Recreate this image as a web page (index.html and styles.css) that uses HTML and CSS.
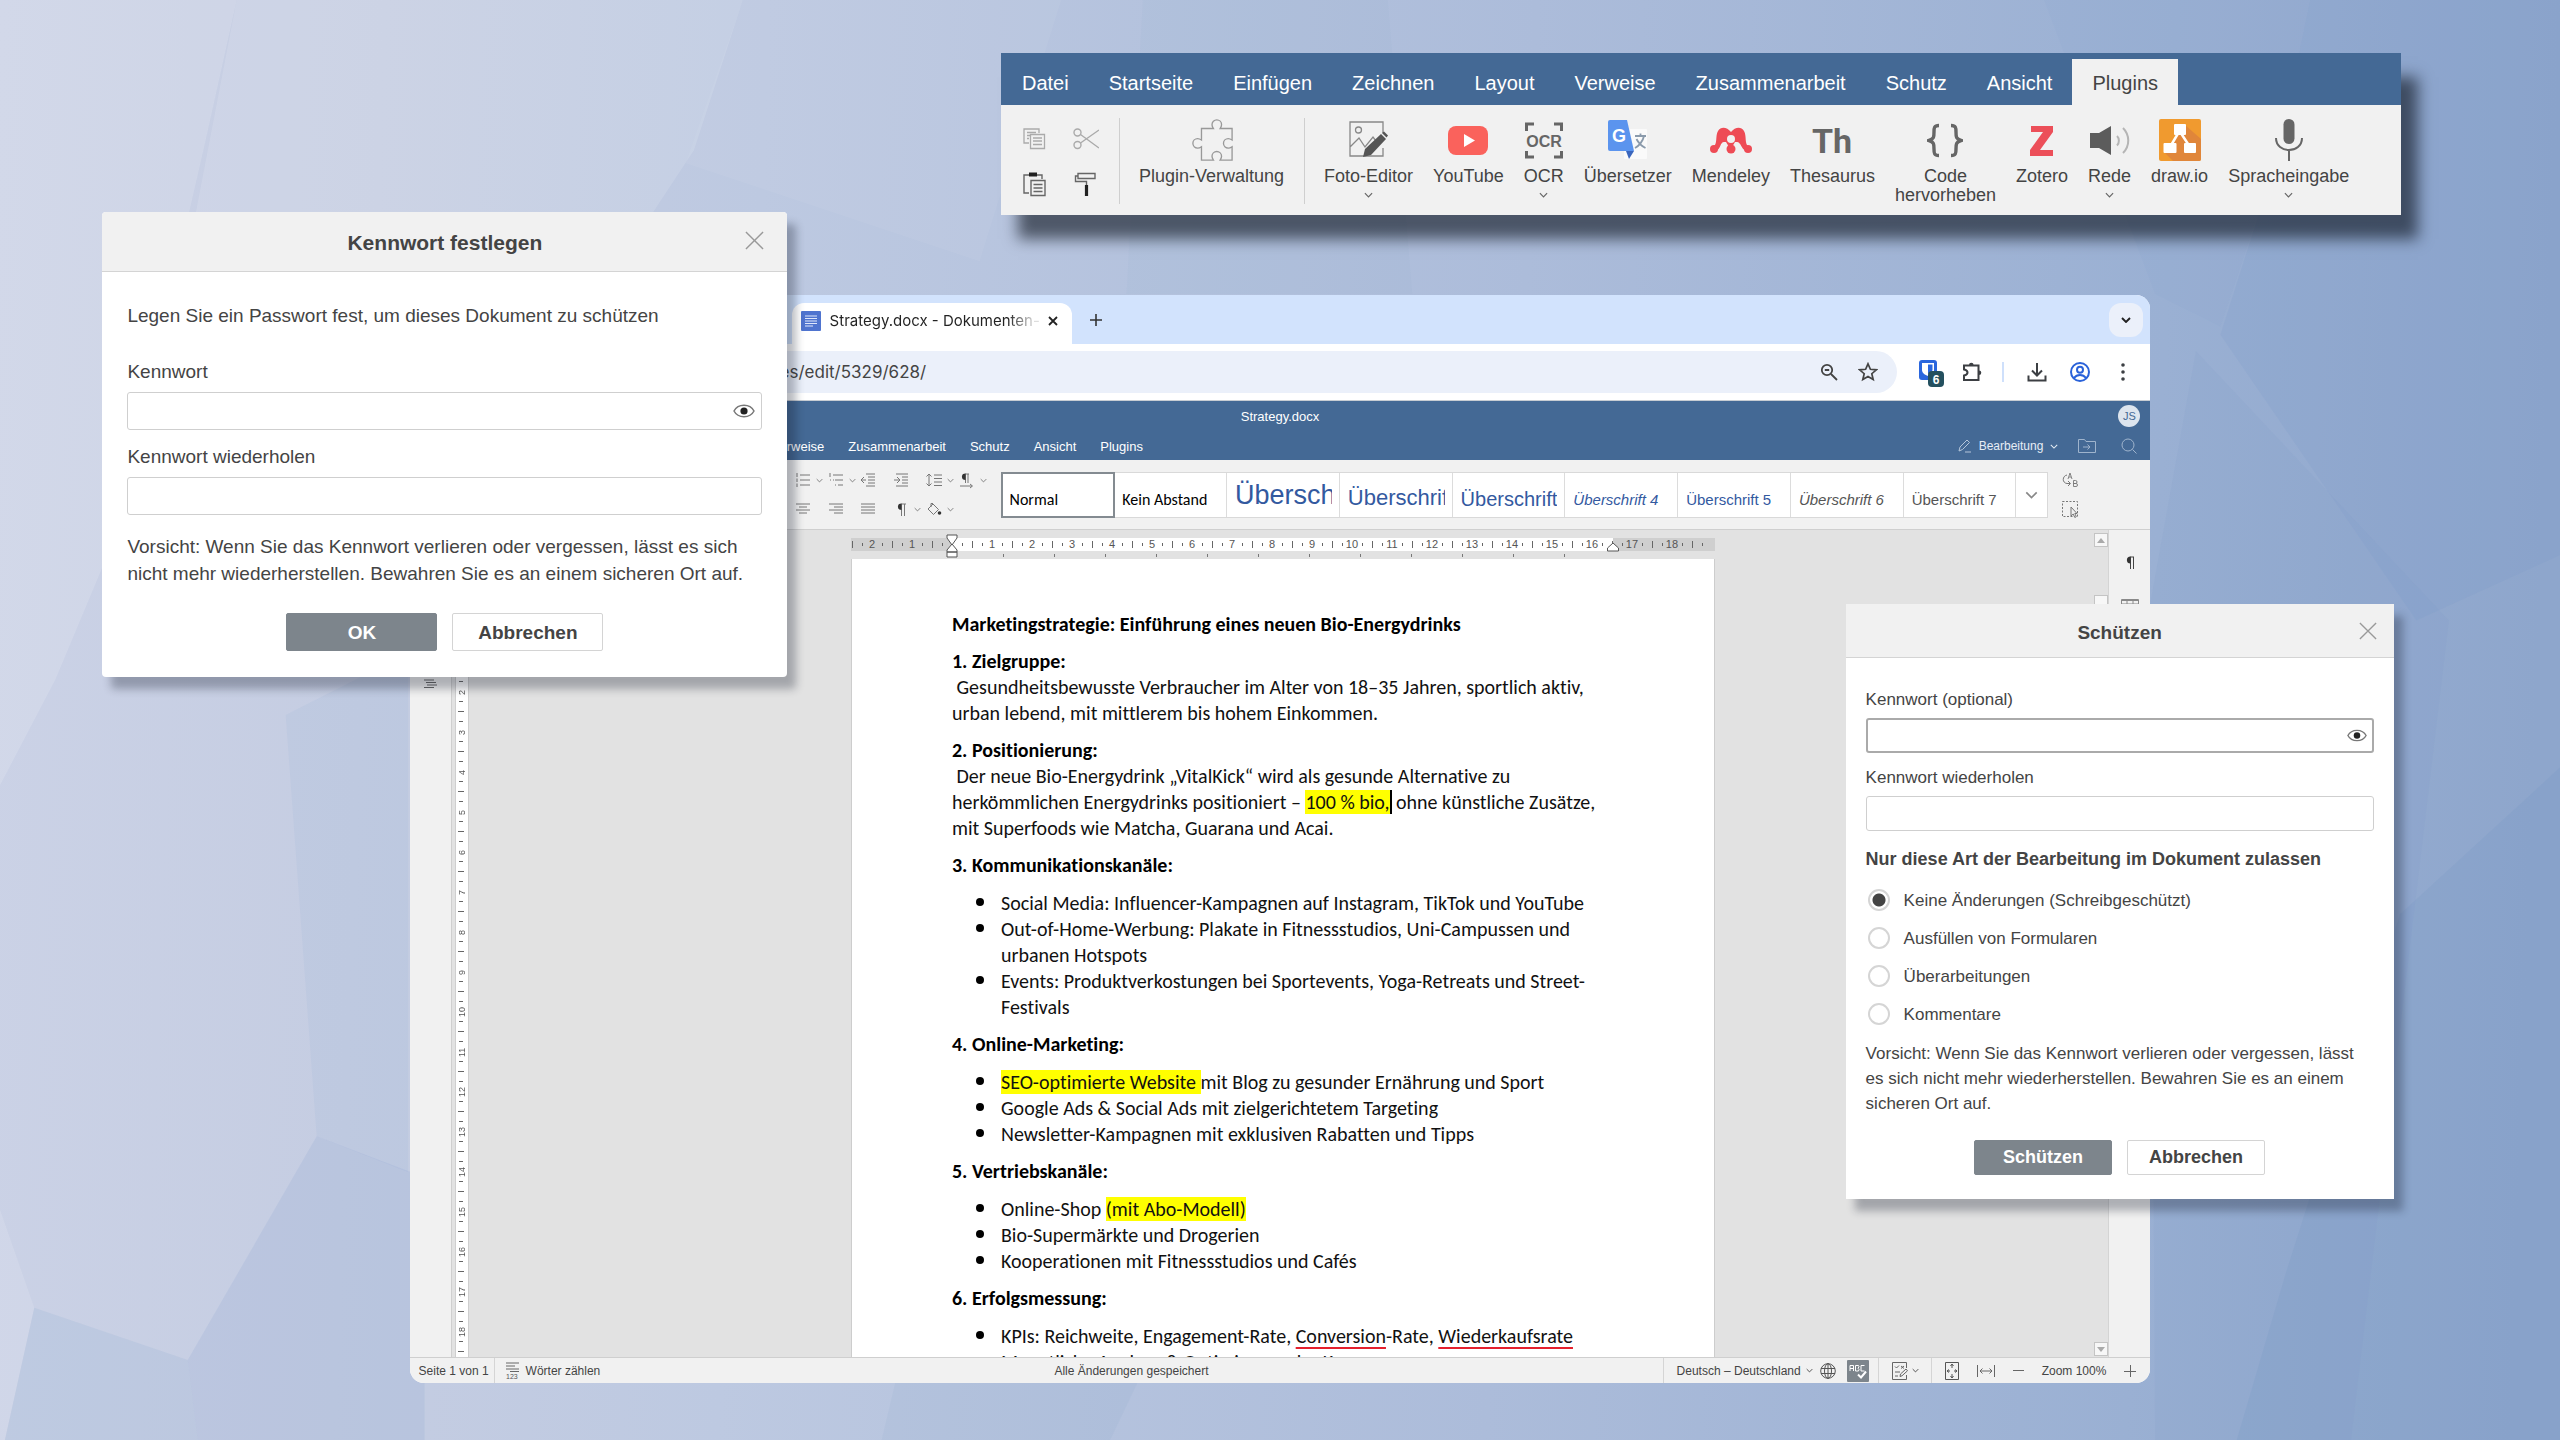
FILE: index.html
```html
<!DOCTYPE html>
<html lang="de">
<head>
<meta charset="utf-8">
<meta name="viewport" content="width=device-width, initial-scale=1">
<title>Strategy.docx</title>
<link rel="stylesheet" href="styles.css">
</head>
<body>
<svg class="defs" aria-hidden="true">
  <symbol id="chev" viewBox="0 0 10 6"><path d="M1 1l4 4 4-4" fill="none" stroke="currentColor" stroke-width="1.3"/></symbol>
  <symbol id="close" viewBox="0 0 20 20"><path d="M1 1l18 18M19 1L1 19" fill="none" stroke="currentColor" stroke-width="1.5"/></symbol>
  <symbol id="eye" viewBox="0 0 22 14"><path d="M1 7C5 -0.6 17 -0.6 21 7C17 14.600 5 14.600 1 7z" fill="#fff" stroke="#777" stroke-width="1.500"/><circle cx="11" cy="7" r="3.600" fill="#222"/></symbol>
</svg>
<main class="desktop">
  <svg class="wall" viewBox="0 0 1568 882" preserveAspectRatio="none" aria-hidden="true">
    <defs>
      <linearGradient id="sky" x1="0" y1="0" x2="1" y2="0.02">
        <stop offset="0" stop-color="#cbd2e6"/><stop offset="0.15" stop-color="#c5cde2"/><stop offset="0.3" stop-color="#bdc9e1"/><stop offset="0.6" stop-color="#acbcda"/><stop offset="0.85" stop-color="#9ab0d3"/><stop offset="1" stop-color="#8ea6cc"/>
      </linearGradient>
    </defs>
    <rect width="1568" height="882" fill="url(#sky)"/>
    <g fill="#fff">
      <path d="M0 0H145L125 90 70 330 34 416 0 481z" opacity=".14"/>
      <path d="M145 0H455L425 92 400 130H120z" opacity=".12"/>
      <path d="M455 0H650L600 160 420 100z" opacity=".05"/>
      <path d="M0 741L21 801 3 882H0z" opacity=".12"/>
    </g>
    <g fill="#8fb0d4">
      <path d="M175 438L250 400V718L194 696z" opacity=".12"/>
      <path d="M194 696L260 721V882H121L115 833z" fill="#8aa3d4" opacity=".2"/>
      <path d="M21 801L115 833 121 882H3z" opacity=".2"/>
    </g>
    <g fill="#7595c4">
      <path d="M540 882L550 840H700L680 882z" opacity=".08"/>
      <path d="M700 0H850L865 180H690z" opacity=".05"/>
      <path d="M1252 0H1415L1395 95 1360 200 1320 180z" opacity=".06"/>
      <path d="M1415 0H1568V340L1480 380 1360 205 1395 95z" opacity=".16"/>
      <path d="M1317 370L1345 215 1500 380 1440 882H1320z" opacity=".1"/>
      <path d="M1568 470L1470 560 1400 780 1370 882H1568z" opacity=".2"/>
    </g>
  </svg>

  <section class="browser">
    <header class="tabstrip">
      <div class="tab">
        <svg width="20" height="20" viewBox="0 0 20 20"><rect width="20" height="20" rx="1" fill="#4f74cf"/><path d="M4 5h12M4 7.500h12M4 10h12M4 12.500h12M4 15h8" stroke="#dfe7fb" stroke-width="1.200"/></svg>
        <span class="tab-name">Strategy.docx - Dokumenten-</span>
        <button class="bare" aria-label="Tab schließen"><svg width="10" height="10" viewBox="0 0 10 10"><path d="M1 1l8 8M9 1L1 9" stroke="#222" stroke-width="1.800"/></svg></button>
      </div>
      <button class="bare newtab" aria-label="Neuer Tab"><svg width="14" height="14" viewBox="0 0 14 14"><path d="M7 1v12M1 7h12" stroke="#333" stroke-width="1.600"/></svg></button>
      <button class="bare tabmenu" aria-label="Tabs"><svg width="10" height="6" viewBox="0 0 10 6"><path d="M1 1l4 4 4-4" fill="none" stroke="#222" stroke-width="1.900"/></svg></button>
    </header>
    <div class="navbar">
      <div class="omnibox">
        <input type="text" value="es/edit/5329/628/" aria-label="Adresse">
        <svg width="18" height="18" viewBox="0 0 18 18" fill="none" stroke="#444" stroke-width="1.800"><circle cx="7" cy="7" r="5.200"/><path d="M11 11l6 6M4.800 7h4.400"/></svg>
        <svg width="20" height="20" viewBox="0 0 20 20" fill="none" stroke="#444" stroke-width="1.700"><path d="M10 1.800l2.400 5.500 6 .5-4.600 3.900 1.400 5.900L10 14.500l-5.200 3.100 1.400-5.900L1.600 7.800l6-.5z"/></svg>
      </div>
      <div class="tools">
        <svg width="26" height="28" viewBox="0 0 26 28"><rect x="1" y="1" width="18" height="20" rx="3" fill="#2a66dd"/><path d="M4 4h12v7c0 3-3 5-6 6-3-1-6-3-6-6z" fill="#fff"/><path d="M10 5.500h4.500v5.500c0 1.500-2 3-4.500 4z" fill="#2a66dd"/><rect x="10" y="12" width="16" height="16" rx="4" fill="#24505f"/><text x="18" y="24.500" text-anchor="middle" class="badge-num">6</text></svg>
        <svg width="22" height="22" viewBox="0 0 22 22" fill="none" stroke="#3c3f43" stroke-width="2"><path d="M3 4.500h14.500v14.500H3v-4.500c2.500-.5 3.500-1.800 3.500-3s-1-2.500-3.500-3z"/><path d="M8 4a2.300 2.300 0 0 1 4.600 0zM18 9.500a2.300 2.300 0 0 1 0 4.600z" fill="#3c3f43" stroke="none"/></svg>
        <i class="tools-sep"></i>
        <svg width="20" height="20" viewBox="0 0 20 20" fill="none" stroke="#3c3f43" stroke-width="2"><path d="M10 1v12M5 8.500l5 5 5-5M1.500 13.500v5h17v-5"/></svg>
        <svg width="20" height="20" viewBox="0 0 20 20" fill="none" stroke="#2a62d9" stroke-width="2"><circle cx="10" cy="10" r="9"/><circle cx="10" cy="7.800" r="3"/><path d="M4 16c3-4 9-4 12 0"/></svg>
        <svg width="20" height="18" viewBox="-8 0 20 18" fill="#3c3f43"><circle cx="2" cy="2" r="1.800"/><circle cx="2" cy="9" r="1.800"/><circle cx="2" cy="16" r="1.800"/></svg>
      </div>
    </div>

    <header class="apphead">
      <div class="titlebar"><h1>Strategy.docx</h1><span class="avatar">JS</span></div>
      <div class="menubar">
        <nav><a href="#">Verweise</a><a href="#">Zusammenarbeit</a><a href="#">Schutz</a><a href="#">Ansicht</a><a href="#">Plugins</a></nav>
        <button class="bare mode"><svg width="14" height="14" viewBox="0 0 14 14" fill="none" stroke="#b6c6da"><path d="M1 12l1-4 7-7 2.500 2.500-7 7zM7 13h6"/></svg>Bearbeitung<svg width="8" height="5"><use href="#chev"/></svg></button>
        <svg width="18" height="14" viewBox="0 0 18 14" fill="none" stroke="#9fb4cd"><path d="M.5 13.500V.5h6l1.500 2h9.500v11zM5 8h7M9.500 5.500L12 8l-2.500 2.500"/></svg>
        <svg width="16" height="16" viewBox="0 0 16 16" fill="none" stroke="#9fb4cd"><circle cx="7" cy="7" r="6"/><path d="M11.500 11.500l4 4"/></svg>
      </div>
    </header>

    <div class="ribbon">
      <div class="para">
        <svg class="c1" width="14" height="14" viewBox="0 0 14 14"><path d="M1 0v4M1 5.500v3.500M1 10.500v3.500M4 2h10M4 7h10M4 12h10"/></svg>
        <svg class="c2" width="7" height="5"><use href="#chev"/></svg>
        <svg class="c3" width="14" height="14" viewBox="0 0 14 14"><path d="M1 0v4M4 2h10M4 7h1M6 7h8M6 12h1M9 12h5M1 7h1"/></svg>
        <svg class="c4" width="7" height="5"><use href="#chev"/></svg>
        <svg class="c5" width="14" height="14" viewBox="0 0 14 14"><path d="M5 1h9M7 4h7M7 7h7M7 10h7M5 13h9M5 7H0M3 4L0 7l3 3"/></svg>
        <svg class="c7" width="14" height="14" viewBox="0 0 14 14"><path d="M2 1h12M8 4h6M8 7h6M8 10h6M2 13h12M0 7h6M3 4l3 3-3 3"/></svg>
        <svg class="c9" width="16" height="14" viewBox="0 0 16 14"><path d="M3 1v12M.5 3.500L3 1l2.500 2.500M.5 10.500L3 13l2.500-2.500M8 2h8M8 5.500h8M8 9h8M8 12.500h8"/></svg>
        <svg class="c10" width="7" height="5"><use href="#chev"/></svg>
        <svg class="c11" width="15" height="15" viewBox="0 0 15 15"><path d="M6 1H10M9 1v9M6.500 1v9M1 13h12M11 11l2.500 2-2.500 2"/><path class="ink" d="M6.500 .5a3.500 3.200 0 0 0 0 6.500z"/></svg>
        <svg class="c12" width="7" height="5"><use href="#chev"/></svg>
        <svg class="c1 r2" width="14" height="12" viewBox="0 0 14 12"><path d="M0 1h14M3 4h8M0 7h14M3 10h8"/></svg>
        <svg class="c3 r2" width="14" height="12" viewBox="0 0 14 12"><path d="M0 1h14M5 4h9M0 7h14M5 10h9"/></svg>
        <svg class="c5 r2" width="14" height="12" viewBox="0 0 14 12"><path d="M0 1h14M0 4h14M0 7h14M0 10h14"/></svg>
        <svg class="c7 r2" width="10" height="13" viewBox="0 0 10 13"><path d="M5 1H10M8.500 1v12M5.500 1v12"/><path class="ink" d="M5.500 .5a3.500 3.200 0 0 0 0 6.500z"/></svg>
        <svg class="c8 r2" width="7" height="5"><use href="#chev"/></svg>
        <svg class="c9 r2" width="16" height="14" viewBox="0 0 16 14"><path d="M2 7l5-5 5.500 5.500-5 5zM5 5V1.500h2"/><circle class="ink" cx="13.500" cy="11" r="1.800"/></svg>
        <svg class="c10 r2" width="7" height="5"><use href="#chev"/></svg>
      </div>
      <div class="gallery">
        <button class="st st-doc on">Normal</button>
        <button class="st st-doc">Kein Abstand</button>
        <button class="st blue h1"><span>Überschrift</span></button>
        <button class="st blue h2"><span>Überschrift</span></button>
        <button class="st blue h3"><span>Überschrift</span></button>
        <button class="st blue it">Überschrift 4</button>
        <button class="st blue">Überschrift 5</button>
        <button class="st it">Überschrift 6</button>
        <button class="st">Überschrift 7</button>
        <button class="more" aria-label="Mehr Stile"><svg width="13" height="8"><use href="#chev"/></svg></button>
      </div>
      <div class="edge">
        <svg width="16" height="16" viewBox="0 0 16 16" fill="none" stroke="#777"><path d="M5 3C0 4 0 11 5 11.500h3M6 9l2.500 2.500L6 14"/><path d="M6 7l2-6 2 6M7 5h2M11.500 8.500v6h2.500a1.500 1.500 0 0 0 0-3h-2.500h2a1.500 1.500 0 0 0 0-3z" stroke-width=".9"/></svg>
        <svg width="16" height="17" viewBox="0 0 16 17" fill="none" stroke="#777"><path d="M.5 .5h15v15H.5z" stroke-dasharray="2 1.500"/><path d="M9 6v9l2.200-2 1.600 3.500 1.500-.8-1.500-3.200H15z" fill="#f1f1f1"/></svg>
      </div>
    </div>

    <div class="work">
      <aside class="rail"><svg width="15" height="9" viewBox="0 0 15 9"><path d="M1 1h10M3 3.500h10M4 6h10M1 8.500h10" stroke="#666"/></svg></aside>
      <div class="vruler"><span>1</span><span>2</span><span>3</span><span>4</span><span>5</span><span>6</span><span>7</span><span>8</span><span>9</span><span>10</span><span>11</span><span>12</span><span>13</span><span>14</span><span>15</span><span>16</span><span>17</span><span>18</span><span></span></div>
      <div class="canvas">
        <div class="hruler">
          <span>2</span><span>1</span><span></span><span>1</span><span>2</span><span>3</span><span>4</span><span>5</span><span>6</span><span>7</span><span>8</span><span>9</span><span>10</span><span>11</span><span>12</span><span>13</span><span>14</span><span>15</span><span>16</span><span>17</span><span>18</span><span></span>
          <svg class="indent" width="12" height="24" viewBox="0 0 12 24" fill="#fff" stroke="#555"><path d="M1 1h10v3L6 11 1 4zM1 18v-2l5-6 5 6v2zM1 18h10v5H1z"/></svg>
          <svg class="indent-r" width="14" height="10" viewBox="0 0 14 10" fill="#fff" stroke="#555"><path d="M1.500 9V6L7 1l5.500 5v3z"/></svg>
        </div>
        <article class="page">
          <h2>Marketingstrategie: Einführung eines neuen Bio-Energydrinks</h2>
          <h3>1. Zielgruppe:</h3>
          <p>&nbsp;Gesundheitsbewusste Verbraucher im Alter von 18–35 Jahren, sportlich aktiv,<br>urban lebend, mit mittlerem bis hohem Einkommen.</p>
          <h3>2. Positionierung:</h3>
          <p>&nbsp;Der neue Bio-Energydrink „VitalKick“ wird als gesunde Alternative zu<br>herkömmlichen Energydrinks positioniert – <mark class="caret">100 % bio,</mark> ohne künstliche Zusätze,<br>mit Superfoods wie Matcha, Guarana und Acai.</p>
          <h3>3. Kommunikationskanäle:</h3>
          <ul>
            <li>Social Media: Influencer-Kampagnen auf Instagram, TikTok und YouTube</li>
            <li>Out-of-Home-Werbung: Plakate in Fitnessstudios, Uni-Campussen und<br>urbanen Hotspots</li>
            <li>Events: Produktverkostungen bei Sportevents, Yoga-Retreats und Street-<br>Festivals</li>
          </ul>
          <h3>4. Online-Marketing:</h3>
          <ul>
            <li><mark>SEO-optimierte Website </mark>mit Blog zu gesunder Ernährung und Sport</li>
            <li>Google Ads &amp; Social Ads mit zielgerichtetem Targeting</li>
            <li>Newsletter-Kampagnen mit exklusiven Rabatten und Tipps</li>
          </ul>
          <h3>5. Vertriebskanäle:</h3>
          <ul>
            <li>Online-Shop <mark>(mit Abo-Modell)</mark></li>
            <li>Bio-Supermärkte und Drogerien</li>
            <li>Kooperationen mit Fitnessstudios und Cafés</li>
          </ul>
          <h3>6. Erfolgsmessung:</h3>
          <ul>
            <li>KPIs: Reichweite, Engagement-Rate, <u>Conversion</u>-Rate, <u>Wiederkaufsrate</u></li>
            <li>Monatliche Analyse &amp; Optimierung der Kampagne</li>
          </ul>
        </article>
      </div>
      <div class="scroll"><i class="up"></i><i class="thumb"></i><i class="down"></i></div>
      <aside class="rail right">
        <svg width="12" height="14" viewBox="0 0 12 14"><path d="M6 1h4M9.500 1v12M6.500 1v12" stroke="#444"/><path d="M6.500 .5a3.500 3.400 0 0 0 0 7z" fill="#333"/></svg>
        <svg width="18" height="14" viewBox="0 0 18 14" fill="none" stroke="#888"><path d="M.5 .5h17v13H.5zM.5 5h17M.5 9h17M6 2v12M12 2v12M0 1.500h18"/></svg>
      </aside>
    </div>

    <footer class="status">
      <span class="cell first">Seite 1 von 1</span>
      <span class="cell words"><svg width="14" height="17" viewBox="0 0 14 17"><path d="M0 1h13M0 4h9M0 7h13M4 9.500h9" stroke="#666"/><text x="0" y="17" class="tiny">123</text></svg>Wörter zählen</span>
      <span class="saved">Alle Änderungen gespeichert</span>
      <span class="cell lang">Deutsch – Deutschland<svg width="7" height="5"><use href="#chev"/></svg>
        <svg class="globe" width="16" height="16" viewBox="0 0 16 16" fill="none" stroke="#555"><circle cx="8" cy="8" r="7.300"/><ellipse cx="8" cy="8" rx="3.500" ry="7.300"/><path d="M8 0v16M1 5.500h14M1 10.500h14"/></svg>
        <svg width="22" height="22" viewBox="0 0 22 22"><rect width="22" height="22" rx="1" fill="#7d858c"/><path d="M3 11V5.500h3.500V11M3 8.500h3.500M8.500 5.500h3l.5 1.300-1 1.400 1 1.300-.5 1.500h-3zM17.500 5.500H14V11h3.500" fill="none" stroke="#fff"/><path d="M11 14.500l3 3 5-6" fill="none" stroke="#fff" stroke-width="2"/></svg>
      </span>
      <span class="cell review"><svg width="16" height="18" viewBox="0 0 16 18" fill="none" stroke="#666"><path d="M14.500 6V.5H.5v17h14V13M3 4.500l1.500 1.500L7 3.500M9 4l3 2.500M12 4L9 6.500M3 10h5M3 14h3M8 14.500l.5-2.500L14 7l1.500 1.800-5.500 5z"/></svg><svg width="7" height="5"><use href="#chev"/></svg></span>
      <span class="cell zoom">
        <svg width="14" height="18" viewBox="0 0 14 18" fill="none" stroke="#555"><path d="M.5 .5h13v17H.5zM7 2v4M5.500 4L7 2l1.500 2M7 16v-4M5.500 14L7 16l1.500-2M2 9h3M4 7.500L2 9l2 1.500M12 9H9M10 7.500L12 9l-2 1.500"/></svg>
        <svg width="18" height="12" viewBox="0 0 18 12" fill="none" stroke="#666"><path d="M.5 0v12M17.500 0v12M3 6h12M5.500 3.500L3 6l2.500 2.500M12.500 3.500L15 6l-2.500 2.500"/></svg>
        <svg width="11" height="11" viewBox="0 0 11 11"><path d="M0 5.500h11" stroke="#666"/></svg>
        <b>Zoom 100%</b>
        <svg width="12" height="12" viewBox="0 0 12 12"><path d="M0 6.500h12M6.500 0v12" stroke="#666"/></svg>
      </span>
    </footer>
  </section>

  <section class="plugins">
    <nav class="ptabs"><a href="#">Datei</a><a href="#">Startseite</a><a href="#">Einfügen</a><a href="#">Zeichnen</a><a href="#">Layout</a><a href="#">Verweise</a><a href="#">Zusammenarbeit</a><a href="#">Schutz</a><a href="#">Ansicht</a><a href="#" class="on">Plugins</a></nav>
    <div class="pbar">
      <div class="clip">
        <svg width="24" height="22" viewBox="0 0 24 22" fill="none" stroke="#aaa" stroke-width="1.300"><path d="M6 15H1V1h15v4M4 4.500h9M4 7.500h3M4 10.500h2"/><path d="M7.500 6.500h14v14h-14zM10 10h9M10 13h9M10 16.500h9"/></svg>
        <svg width="26" height="22" viewBox="0 0 26 22" fill="none" stroke="#aaa" stroke-width="1.400"><circle cx="4.500" cy="4.500" r="3.500"/><circle cx="4.500" cy="17" r="3.500"/><path d="M7.500 6.500L26 20M7.500 15L26 2"/></svg>
        <svg width="24" height="25" viewBox="0 0 24 25" fill="none" stroke="#666" stroke-width="1.400"><path d="M6 21H1V3h18v4"/><path d="M6 .5h8v4H6z" fill="#222" stroke="none"/><path d="M8 8.500h14v15H8zM10.500 12.500h9M10.500 16h9M10.500 19.500h9"/></svg>
        <svg width="26" height="25" viewBox="0 0 26 25" fill="none" stroke="#666" stroke-width="1.400"><path d="M5 1.500h17v5H5zM5 4H2.500v5.500h11V14"/><path d="M13.500 13v11" stroke="#222" stroke-width="3.200"/></svg>
      </div>
      <button class="pl manage"><svg width="44" height="46" viewBox="0 0 44 46" fill="none" stroke="#999" stroke-width="1.400"><path d="M11 11h12.500c-1-1.500-1.500-2.500-1.500-4a5 5 0 0 1 10 0c0 1.500-.5 2.500-1.500 4H43v12c-1.500-1-2.500-1.500-4-1.500a5 5 0 0 0 0 10c1.500 0 2.500-.5 4-1.500v14H30.500c1-1.500 1.500-2.500 1.500-4a5 5 0 0 0-10 0c0 1.500.5 2.500 1.500 4H11V30c-1.500 1-2.500 1.500-4 1.500a5 5 0 0 1 0-10c1.500 0 2.500.5 4 1.500z"/></svg><span>Plugin-Verwaltung</span></button>
      <div class="plist">
        <button class="pl"><svg width="40" height="40" viewBox="0 0 40 40" fill="none" stroke="#888" stroke-width="1.300"><path d="M34 13V2H1v34h33V28M1 27l9-9 6 9 8-10 3 4M1 35"/><circle cx="9.500" cy="10" r="3"/><path d="M14 37l2-8L32 14l5 5-15 16z" fill="#555" stroke="none"/><path d="M33 13l2-1.500 4 4-1.500 2z" fill="#555" stroke="none"/></svg><span>Foto-Editor</span><svg width="9" height="6"><use href="#chev"/></svg></button>
        <button class="pl"><svg width="40" height="40" viewBox="0 0 40 40"><rect y="6" width="40" height="29" rx="8" fill="#fa625c"/><path d="M16 14l11 6.500L16 27z" fill="#fff"/></svg><span>YouTube</span></button>
        <button class="pl"><svg width="38" height="40" viewBox="0 0 38 40"><path d="M1.500 11V4H9M29 4h7.500v7M1.500 31v6H9M29 37h7.500v-6" fill="none" stroke="#666" stroke-width="3"/><text x="19" y="26.500" text-anchor="middle" class="ocr">OCR</text></svg><span>OCR</span><svg width="9" height="6"><use href="#chev"/></svg></button>
        <button class="pl"><svg width="40" height="42" viewBox="0 0 40 42"><rect x="16" y="10" width="23" height="30" rx="1" fill="#fafafa"/><path d="M27 17h11M32.500 14.500V17M36 17c-1 5-5 10-9 12M28.500 20c2 4 5 7 9 9" stroke="#8a9aab" stroke-width="1.800" fill="none"/><path d="M2 1h17l7 31H2a2 2 0 0 1-2-2V3a2 2 0 0 1 2-2z" fill="#5b94ee"/><path d="M18 32h8l-5 8z" fill="#3a66bd"/><text x="11" y="23" text-anchor="middle" class="gee">G</text></svg><span>Übersetzer</span></button>
        <button class="pl"><svg width="42" height="40" viewBox="0 0 42 40" fill="#ee4b55"><circle cx="4" cy="29" r="4"/><circle cx="21" cy="29" r="4.500"/><circle cx="38" cy="29" r="4"/><path d="M3 27C8 24 5 16 8 11s9-4 13 1c4-5 10-6 13-1s0 13 5 16l-3 4c-5-2-5-9-9-9h-2l-3 5h-3l-3-5h-2c-4 0-3 7-8 9z"/><circle cx="21" cy="19" r="4" fill="#f1f1f1"/></svg><span>Mendeley</span></button>
        <button class="pl"><svg width="42" height="40" viewBox="0 0 42 40"><text x="21" y="33" text-anchor="middle" class="th">Th</text></svg><span>Thesaurus</span></button>
        <button class="pl"><svg width="36" height="40" viewBox="0 0 36 40" fill="none" stroke="#666" stroke-width="3.400"><path d="M12 5.500C7 5.500 7 8 7 12c0 5 0 7-5 8.500 5 1.500 5 3.500 5 8.500 0 4 0 6.500 5 6.500M24 5.500c5 0 5 2.500 5 6.500 0 5 0 7 5 8.500-5 1.500-5 3.500-5 8.500 0 4 0 6.500-5 6.500"/></svg><span>Code<br>hervorheben</span></button>
        <button class="pl"><svg width="26" height="40" viewBox="0 0 26 40"><path d="M2 6h22v6L11 30h13v6H1v-6l13-18H2z" fill="#ec4f59"/></svg><span>Zotero</span></button>
        <button class="pl"><svg width="40" height="40" viewBox="0 0 40 40"><path d="M0 13h9L21 6v29L9 28H0z" fill="#5c5c5c"/><path d="M27 16c2.500 2.500 2.500 7 0 9.500M33 8c7 7 7 18 0 25" fill="none" stroke="#b5b5b5" stroke-width="2"/></svg><span>Rede</span><svg width="9" height="6"><use href="#chev"/></svg></button>
        <button class="pl"><svg width="42" height="42" viewBox="0 0 42 42"><rect width="42" height="42" rx="2" fill="#f09a2f"/><path d="M26 6l16 14v20a2 2 0 0 1-2 2H14l-8-8z" fill="#e0863a"/><path d="M20.500 12L11 28M20.500 12L31 28" stroke="#fff" stroke-width="2.500"/><rect x="15" y="5" width="12" height="11" rx="1" fill="#fff"/><rect x="4.500" y="24" width="13" height="10" rx="1" fill="#fff"/><rect x="25" y="24" width="12" height="10" rx="1" fill="#fff"/></svg><span>draw.io</span></button>
        <button class="pl"><svg width="30" height="42" viewBox="0 0 30 42"><rect x="9.500" y="0" width="11" height="25" rx="5.500" fill="#666"/><path d="M2 19c0 16 26 16 26 0M15 31v11" fill="none" stroke="#666" stroke-width="2"/></svg><span>Spracheingabe</span><svg width="9" height="6"><use href="#chev"/></svg></button>
      </div>
    </div>
  </section>

  <form class="dialog pass">
    <header><h2>Kennwort festlegen</h2><button type="button" class="bare x" aria-label="Schließen"><svg width="19" height="19"><use href="#close"/></svg></button></header>
    <div class="content">
      <p class="lead">Legen Sie ein Passwort fest, um dieses Dokument zu schützen</p>
      <label for="pw1">Kennwort</label>
      <div class="field"><input id="pw1" type="password"><button type="button" class="bare" aria-label="Anzeigen"><svg width="22" height="14"><use href="#eye"/></svg></button></div>
      <label for="pw2">Kennwort wiederholen</label>
      <div class="field"><input id="pw2" type="password"></div>
      <p class="warn">Vorsicht: Wenn Sie das Kennwort verlieren oder vergessen, lässt es sich<br>nicht mehr wiederherstellen. Bewahren Sie es an einem sicheren Ort auf.</p>
      <div class="actions"><button type="button" class="primary">OK</button><button type="button">Abbrechen</button></div>
    </div>
  </form>

  <form class="dialog protect">
    <header><h2>Schützen</h2><button type="button" class="bare x" aria-label="Schließen"><svg width="18" height="18"><use href="#close"/></svg></button></header>
    <div class="content">
      <label for="pp1">Kennwort (optional)</label>
      <div class="field focus"><input id="pp1" type="password"><button type="button" class="bare" aria-label="Anzeigen"><svg width="20" height="13"><use href="#eye"/></svg></button></div>
      <label for="pp2">Kennwort wiederholen</label>
      <div class="field"><input id="pp2" type="password"></div>
      <h3>Nur diese Art der Bearbeitung im Dokument zulassen</h3>
      <label class="opt"><input type="radio" name="kind" checked>Keine Änderungen (Schreibgeschützt)</label>
      <label class="opt"><input type="radio" name="kind">Ausfüllen von Formularen</label>
      <label class="opt"><input type="radio" name="kind">Überarbeitungen</label>
      <label class="opt"><input type="radio" name="kind">Kommentare</label>
      <p class="warn">Vorsicht: Wenn Sie das Kennwort verlieren oder vergessen, lässt<br>es sich nicht mehr wiederherstellen. Bewahren Sie es an einem<br>sicheren Ort auf.</p>
      <div class="actions"><button type="button" class="primary">Schützen</button><button type="button">Abbrechen</button></div>
    </div>
  </form>
</main>
</body>
</html>
```
FILE: styles.css
```css
* { box-sizing: border-box; }
body { margin: 0; font-family: "Liberation Sans", Arial, sans-serif; color: #444; }
h1, h2, h3, p, ul { margin: 0; padding: 0; }
a { color: inherit; text-decoration: none; }
svg { display: block; flex: none; }
button, input { font: inherit; color: inherit; }
.defs { position: absolute; width: 0; height: 0; }
.bare { border: 0; background: none; padding: 0; display: flex; align-items: center; justify-content: center; }

.desktop { position: relative; min-height: 100vh; overflow: hidden; background: #b3c1dd; }
.wall { position: absolute; inset: 0; width: 100%; height: 100%; }

/* Browser window */
.browser { position: absolute; left: 16%; top: 295px; bottom: 57px; width: 68%; display: flex; flex-direction: column; border-radius: 14px; overflow: hidden; background: #fff; }
.tabstrip { display: flex; align-items: flex-end; height: 49px; padding: 0 7px 0 382px; background: #d2e3fd; flex: none; }
.tab { display: flex; align-items: center; gap: 9px; width: 280px; height: 41px; padding: 0 14px 6px 9px; background: #fff; border-radius: 12px 12px 0 0; }
.tab-name { flex: 1; overflow: hidden; white-space: nowrap; font: 15px/20px Inter, sans-serif; color: #222; background: linear-gradient(90deg, #222 85%, #ddd 98%); -webkit-background-clip: text; background-clip: text; -webkit-text-fill-color: transparent; }
.newtab { width: 48px; height: 48px; }
.tabmenu { width: 34px; height: 34px; margin: 0 0 7px auto; border-radius: 12px; background: #ebf0fa; }
.navbar { display: flex; align-items: center; height: 57px; flex: none; border-bottom: 1px solid #c8cdd3; }
.omnibox { display: flex; align-items: center; gap: 20px; flex: 1; height: 42px; padding: 0 19px 0 370px; background: #ebf0fa; border-radius: 0 21px 21px 0; }
.omnibox input { flex: 1; min-width: 0; padding: 0; border: 0; background: none; outline: 0; font: 17px Inter, sans-serif; color: #444; }
.tools { display: flex; align-items: center; gap: 23px; padding: 0 17px 0 21px; }
.tools > svg:first-child { margin: 2px -6px 0 0; }
.tools-sep { width: 2px; height: 20px; margin-left: -4px; background: #cfe0fb; }
.badge-num { font: bold 12px "Liberation Sans", sans-serif; fill: #fff; }

/* Editor header */
.apphead { flex: none; height: 59px; background: #446995; color: #fff; font-size: 13px; }
.titlebar { display: grid; grid-template-columns: 1fr auto 1fr; align-items: center; height: 30px; padding: 0 10px; }
.titlebar h1 { grid-column: 2; font: 13px "Liberation Sans", sans-serif; }
.avatar { justify-self: end; width: 22px; height: 22px; border-radius: 50%; background: #dde5ee; color: #446995; font-size: 11px; line-height: 22px; text-align: center; }
.menubar { display: flex; align-items: center; gap: 25px; height: 29px; padding: 1px 13px 0 362px; }
.menubar nav { display: flex; gap: 24px; margin-right: auto; }
.mode { gap: 7px; margin-right: -5px; font-size: 12px; color: #e6edf5; }

/* Ribbon */
.ribbon { display: grid; grid-template-columns: 591px 1fr 102px; align-items: center; flex: none; height: 70px; background: #f1f1f1; border-bottom: 1px solid #cfcfcf; }
.para { display: grid; grid-template-columns: repeat(12, 1fr); grid-auto-rows: 29px; width: 197px; margin-left: 385px; justify-items: center; align-items: center; color: #777; }
.para svg { grid-row: 1; overflow: visible; fill: none; stroke: #777; }
.para .r2 { grid-row: 2; }
.para .ink { fill: #333; stroke: none; }
.c1 { grid-column: 1; } .c2 { grid-column: 2; } .c3 { grid-column: 3; } .c4 { grid-column: 4; } .c5 { grid-column: 5; } .c7 { grid-column: 7; } .c8 { grid-column: 8; } .c9 { grid-column: 9; } .c10 { grid-column: 10; } .c11 { grid-column: 11; } .c12 { grid-column: 12; }
.gallery { display: grid; grid-template-columns: repeat(9, minmax(0, 1fr)) 31px; height: 46px; background: #fff; border: 1px solid #d9d9d9; }
.st { min-width: 0; display: flex; align-items: flex-end; padding: 0 7px 8px 8px; border: 0; border-right: 1px solid #dcdcdc; background: none; font-size: 15px; line-height: 18px; white-space: nowrap; text-align: left; color: #555; }
.st span { overflow: hidden; line-height: 30px; }
.st.on { outline: 2px solid #848b91; outline-offset: -1px; }
.st-doc { font-family: Carlito, Lato, sans-serif; font-size: 16px; color: #000; }
.blue { color: #33599f; }
.it { font-style: italic; }
.h1 { font-size: 27px; padding-bottom: 7px; }
.h2 { font-size: 22px; padding-bottom: 4px; }
.h3 { font-size: 20px; padding-bottom: 3px; }
.more { width: 31px; border: 0; background: none; display: grid; place-items: center; padding: 0; color: #888; }
.edge { display: grid; gap: 13px; padding-left: 14px; }

/* Work area */
.work { flex: 1; min-height: 0; display: flex; overflow: hidden; background: #e2e2e2; }
.rail { width: 42px; padding: 149px 0 0 13px; background: #f1f1f1; border-right: 1px solid #cfcfcf; flex: none; }
.rail.right { display: flex; flex-direction: column; align-items: center; gap: 29px; padding: 26px 0 0; border: 0; border-left: 1px solid #d4d4d4; }
.vruler { width: 12px; margin: 0 4px; padding-top: 102px; background: #fff; box-shadow: 0 0 0 1px #cfcfcf; flex: none; }
.vruler span { display: block; width: 12px; height: 40px; writing-mode: vertical-rl; transform: rotate(180deg); text-align: center; font-size: 9px; line-height: 12px; color: #555; background: linear-gradient(#666, #666) 4px 0 / 6px 1px, linear-gradient(#666, #666) 5px 10px / 4px 1px, linear-gradient(#666, #666) 5px 30px / 4px 1px; background-repeat: no-repeat; }
.canvas { flex: 1; min-width: 0; padding-top: 8px; overflow: hidden; }
.hruler { position: relative; display: flex; width: 864px; height: 13px; margin: 0 auto 8px; padding-left: 1px; background: linear-gradient(90deg, #cfcfcf 101px, #fff 101px, #fff 762px, #cfcfcf 762px); }
.hruler span { flex: 0 0 40px; text-align: center; font-size: 11px; line-height: 13px; color: #555; background: linear-gradient(#666, #666) 0 3px / 1px 7px, linear-gradient(#666, #666) 10px 5px / 1px 3px, linear-gradient(#666, #666) 30px 5px / 1px 3px; background-repeat: no-repeat; }
.hruler span:nth-of-type(22) { flex-basis: 23px; }
.hruler::after { content: ""; position: absolute; left: 152px; right: 112px; top: 16px; height: 3px; background: repeating-linear-gradient(90deg, #777 0 1px, transparent 1px 51px); }
.indent { position: absolute; left: 95px; top: -4px; }
.indent-r { position: absolute; left: 755px; top: 4px; }
.page { width: 864px; margin: 0 auto; min-height: 900px; padding: 52px 80px 0 100px; background: #fff; border: 1px solid #cdcdcd; border-width: 0 1px; font: 20px/26px Carlito, Lato, sans-serif; font-variant-ligatures: none; color: #111; white-space: nowrap; }
.page h2, .page h3 { font-size: inherit; font-weight: bold; color: #000; }
.page h3 { margin-top: 11px; }
.page ul { margin-top: 12px; list-style: none; }
.page li { position: relative; padding-left: 49px; }
.page li::before { content: ""; position: absolute; left: 24px; top: 8px; width: 8px; height: 8px; border-radius: 50%; background: #000; }
.page mark { background: #ff0; color: inherit; }
.page .caret { border-right: 2px solid #000; }
.page u { text-decoration: underline #e5202d 2px; text-underline-offset: 4px; }
.scroll { position: relative; width: 14px; flex: none; display: flex; flex-direction: column; padding: 3px 0 1px; }
.scroll i { width: 14px; height: 14px; border: 1px solid #c4c4c4; background: #f7f7f7; display: grid; place-items: center; }
.scroll .thumb { height: 400px; margin-top: 48px; }
.scroll .down { margin-top: auto; }
.up::after, .down::after { content: ""; border: 4px solid transparent; border-bottom: 5px solid #aaa; border-top: 0; }
.down::after { transform: rotate(180deg); }

/* Status bar */
.status { display: flex; align-items: center; flex: none; height: 26px; background: #f1f1f1; border-top: 1px solid #cfcfcf; font-size: 12px; }
.cell { display: flex; align-items: center; height: 100%; }
.first { width: 85px; padding-left: 9px; border-right: 1px solid #d5d5d5; }
.words { gap: 6px; padding-left: 11px; }
.saved { flex: 1; text-align: center; }
.lang { gap: 5px; padding: 0 9px 0 13px; border-left: 1px solid #d5d5d5; }
.globe { margin: 0 6px 0 2px; }
.review { gap: 4px; padding: 0 12px 0 13px; border: 1px solid #d5d5d5; border-width: 0 1px; }
.zoom { gap: 18px; padding: 0 14px 0 13px; }
.zoom b { font-weight: normal; }
.tiny { font: 7px "Liberation Sans", sans-serif; fill: #555; }

/* Plugin toolbar */
.plugins { position: absolute; left: 39.1%; top: 53px; width: 54.7%; background: #f1f1f1; box-shadow: 17px 24px 14px rgba(10, 16, 26, .6); }
.ptabs { display: flex; height: 52px; padding: 6px 0 0 1px; background: #446995; color: #fff; font-size: 20px; line-height: 49px; }
.ptabs a { height: 46px; padding: 0 20px; }
.ptabs .on { background: #f1f1f1; color: #444; }
.pbar { display: flex; height: 110px; padding-top: 13px; }
.clip { display: grid; grid-template-columns: 50px 26px; grid-template-rows: 22px 25px; row-gap: 22px; padding: 10px 20px 0 22px; height: 86px; border-right: 1px solid #cfcfcf; }
.pl { display: flex; flex-direction: column; align-items: center; border: 0; padding: 0; background: none; font-size: 18px; line-height: 19px; color: #444; white-space: nowrap; }
.pl > svg:first-child { height: 44px; margin-bottom: 5px; }
.pl > svg:last-child { margin-top: 6px; color: #666; }
.manage { padding: 0 20px 0 19px; height: 86px; border-right: 1px solid #cfcfcf; }
.plist { display: flex; align-items: flex-start; gap: 20px; padding-left: 19px; }
.ocr { font: bold 16px "Liberation Sans", sans-serif; fill: #666; }
.gee { font: bold 18px "Liberation Sans", sans-serif; fill: #fff; }
.th { font: bold 34px Roboto, sans-serif; fill: #666; }

/* Dialogs */
.dialog { position: absolute; background: #fff; box-shadow: 9px 12px 8px rgba(20, 28, 44, .3); }
.dialog header { position: relative; background: #f1f1f1; border-bottom: 1px solid #d4d4d4; text-align: center; }
.x { position: absolute; color: #999; }
.field { position: relative; }
.field input { display: block; width: 100%; border: 1px solid #cfcfcf; border-radius: 3px; background: #fff; outline: 0; }
.field button { position: absolute; right: 7px; top: 0; height: 100%; }
.actions { display: flex; justify-content: center; gap: 15px; }
.actions button { border: 1px solid #d4d4d4; background: #fff; border-radius: 2px; font-weight: bold; padding: 0; }
.actions .primary { background: #7d858c; border-color: #7d858c; color: #fff; }

.pass { left: 4%; top: 212px; width: 685px; border-radius: 4px; font-size: 19px; line-height: 27px; }
.pass header { height: 60px; border-radius: 4px 4px 0 0; }
.pass h2 { font-size: 21px; line-height: 62px; }
.pass .x { right: 23px; top: 19px; }
.pass .content { padding: 30px 25px 26px; }
.pass label { display: block; margin: 13px 0 7px; }
.pass .lead + label { margin-top: 29px; }
.pass .field input { height: 38px; }
.pass .warn { margin: 18px 0 26px; }
.pass .actions button { width: 151px; height: 38px; }

.protect { right: 6.5%; top: 604px; width: 548px; font-size: 17px; line-height: 25px; }
.protect header { height: 54px; }
.protect h2 { font-size: 19px; line-height: 57px; }
.protect .x { right: 17px; top: 18px; }
.protect .content { padding: 29px 20px 24px; }
.protect label { display: block; margin-bottom: 6px; }
.protect .field { margin-bottom: 12px; }
.protect .field input { height: 35px; }
.protect .focus input { border: 2px solid #aaa; }
.protect h3 { font-size: 18px; margin: 16px 0 17px; }
.protect label.opt { display: flex; align-items: center; gap: 14px; height: 22px; margin: 0 0 16px 2px; }
.opt input { appearance: none; width: 22px; height: 22px; margin: 0; border: 2px solid #d5d5d5; border-radius: 50%; background: #fff; }
.opt input:checked { background: radial-gradient(circle, #444 6px, #fff 7px); }
.protect .warn { margin: 0 0 24px; }
.protect .actions button { width: 138px; height: 35px; font-size: 18px; }
```
